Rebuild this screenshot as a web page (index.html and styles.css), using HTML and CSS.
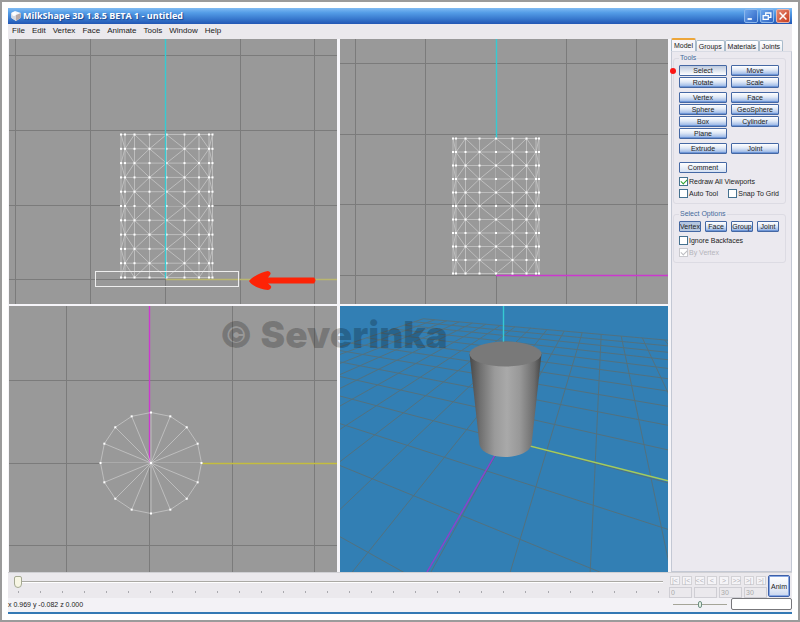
FILE: index.html
```html
<!DOCTYPE html>
<html lang="en">
<head>
    <meta charset="UTF-8">
    <meta name="viewport" content="width=device-width, initial-scale=1.0">
    <title>MilkShape 3D 1.8.5 BETA 1 - untitled</title>
    <link rel="stylesheet" href="styles.css">
</head>
<body>

<div class="window">
    <header class="titlebar">
        <svg class="logo" viewBox="0 0 12 12">
            <path d="M1 3 L5 1 L11 3 L10.500 8 L6 11 L1.500 8 Z" fill="#f4f6fa"/>
            <path d="M1 3 L6 5 L6 11 L1.500 8 Z" fill="#d5d9e2"/>
            <path d="M6 5 L11 3 L10.500 8 L6 11 Z" fill="#b9a9a6"/>
            <circle cx="4" cy="4" r="2" fill="#fff"/>
        </svg>
        <h1>MilkShape 3D 1.8.5 BETA 1 - untitled</h1>
        <div class="window-buttons">
            <button type="button" aria-label="Minimize"><svg viewBox="0 0 14 14"><path d="M3 10.500h5" stroke="#fff" stroke-width="2"/></svg></button>
            <button type="button" aria-label="Restore"><svg viewBox="0 0 14 14"><path d="M5.500 6V3.500h6v5H9M5 3.500h7" stroke="#fff" fill="none" stroke-width="1.500"/><path d="M2.500 6.500h6v4.500h-6zM2 6.500h7" stroke="#fff" fill="none" stroke-width="1.500"/></svg></button>
            <button type="button" class="close" aria-label="Close"><svg viewBox="0 0 14 14"><path d="M3 3l8 8M11 3l-8 8" stroke="#fff" stroke-width="1.800"/></svg></button>
        </div>
    </header>

    <nav class="menu">
        <a href="#">File</a>
        <a href="#">Edit</a>
        <a href="#">Vertex</a>
        <a href="#">Face</a>
        <a href="#">Animate</a>
        <a href="#">Tools</a>
        <a href="#">Window</a>
        <a href="#">Help</a>
    </nav>

    <main class="workspace">
        <div class="viewports">
            <svg class="view" viewBox="9 39 328 265" preserveAspectRatio="xMidYMid slice">
                <path class="grid" d="M15.500 0V400M90.500 0V400M165.500 0V400M240.500 0V400M314.500 0V400M0 55.500H400M0 130.500H400M0 205.500H400M0 279.500H400"/>
                <path class="axis-x soft" d="M166 279.500H400"/>
                <g id="front"></g>
                <path class="axis-y" d="M165.500 39V278"/>
                <rect class="selection" x="95.500" y="271.500" width="143" height="15"/>
                <path class="arrow" d="M249 281C253 276 262 272 268 271Q272 272 270 275L268 277.500H314Q317 280 314 283.500H268L271 286Q272 289 268 290C260 289 252 286 249 281Z"/>
            </svg>
            <svg class="view" viewBox="340 39 328 265" preserveAspectRatio="xMidYMid slice">
                <path class="grid" d="M355.500 0V400M425.500 0V400M496.500 0V400M566.500 0V400M636.500 0V400M300 63.500H700M300 134.500H700M300 204.500H700M300 275.500H700"/>
                <path class="axis-y" d="M496.500 39V138"/>
                <path class="axis-z" d="M496 275.500H700"/>
                <g id="side"></g>
            </svg>
            <svg class="view" viewBox="9 306 328 266" preserveAspectRatio="xMidYMid slice">
                <path class="grid" d="M66.500 300V600M149.500 300V600M232.500 300V600M314.500 300V600M0 380.500H400M0 463.500H400M0 545.500H400"/>
                <path class="axis-z" d="M149.500 306V463"/>
                <path class="axis-x" d="M202 463.500H400"/>
                <g id="top"></g>
            </svg>
            <svg class="view view-3d" viewBox="340 306 328 266" preserveAspectRatio="xMidYMid slice">
                <defs>
                    <linearGradient id="shade">
                        <stop offset="0" stop-color="#484848"/>
                        <stop offset="0.150" stop-color="#707070"/>
                        <stop offset="0.350" stop-color="#9a9a9a"/>
                        <stop offset="0.520" stop-color="#a9a9a9"/>
                        <stop offset="0.700" stop-color="#989898"/>
                        <stop offset="0.900" stop-color="#6c6c6c"/>
                        <stop offset="1" stop-color="#444"/>
                    </linearGradient>
                </defs>
                <g id="floor"></g>
                <path class="axis-y" d="M503.500 306V345"/>
                <path class="axis-x bright" d="M504 439.500L668 480.700"/>
                <path class="axis-z dim" d="M504 439.500L427 572"/>
                <path class="body" d="M469.500 354L479.500 445C484 461 526 461 531.500 445L541.500 354Z"/>
                <ellipse cx="505.500" cy="354" rx="36" ry="12.500" fill="#797979"/>
            </svg>
            <div class="watermark">© Severinka</div>
        </div>

        <aside class="sidebar">
            <div class="tabs">
                <button type="button" class="active">Model</button>
                <button type="button">Groups</button>
                <button type="button">Materials</button>
                <button type="button">Joints</button>
            </div>
            <div class="panel">
                <fieldset>
                    <legend>Tools</legend>
                    <div class="tools">
                        <button type="button" class="selected">Select</button>
                        <button type="button">Move</button>
                        <button type="button">Rotate</button>
                        <button type="button">Scale</button>
                    </div>
                    <div class="tools">
                        <button type="button">Vertex</button>
                        <button type="button">Face</button>
                        <button type="button">Sphere</button>
                        <button type="button">GeoSphere</button>
                        <button type="button">Box</button>
                        <button type="button">Cylinder</button>
                        <button type="button">Plane</button>
                    </div>
                    <div class="tools">
                        <button type="button">Extrude</button>
                        <button type="button">Joint</button>
                    </div>
                    <div class="tools comment">
                        <button type="button" class="light">Comment</button>
                    </div>
                    <div class="checks">
                        <label class="wide"><input type="checkbox" checked>Redraw All Viewports</label>
                        <label><input type="checkbox">Auto Tool</label>
                        <label><input type="checkbox">Snap To Grid</label>
                    </div>
                    <span class="dot"></span>
                </fieldset>
                <fieldset>
                    <legend>Select Options</legend>
                    <div class="options">
                        <button type="button" class="pressed">Vertex</button>
                        <button type="button">Face</button>
                        <button type="button">Group</button>
                        <button type="button">Joint</button>
                    </div>
                    <div class="checks">
                        <label class="wide"><input type="checkbox">Ignore Backfaces</label>
                        <label class="wide disabled"><input type="checkbox" checked disabled>By Vertex</label>
                    </div>
                </fieldset>
            </div>
        </aside>
    </main>

    <section class="timeline">
        <div class="track">
            <input type="range" class="frames" min="0" max="29" value="0" aria-label="Frame">
            <div class="ticks" id="ticks"></div>
        </div>
        <div class="player">
            <div class="controls">
                <button type="button" disabled>|&lt;</button>
                <button type="button" disabled>|&lt;</button>
                <button type="button" disabled>&lt;&lt;</button>
                <button type="button" disabled>&lt;</button>
                <button type="button" disabled>&gt;</button>
                <button type="button" disabled>&gt;&gt;</button>
                <button type="button" disabled>&gt;|</button>
                <button type="button" disabled>&gt;|</button>
            </div>
            <div class="numbers">
                <input type="text" value="0" aria-label="Current frame" disabled>
                <input type="text" value="" aria-label="Time" disabled>
                <input type="text" value="30" aria-label="Last frame" disabled>
                <input type="text" value="30" aria-label="Total frames" disabled>
            </div>
        </div>
        <button type="button" class="anim">Anim</button>
    </section>

    <footer class="status">
        <span>x 0.969 y -0.082 z 0.000</span>
        <input type="range" class="speed" aria-label="Speed">
        <input type="text" class="message" aria-label="Message">
    </footer>
</div>

<script src="scene.js"></script>
</body>
</html>
```
FILE: styles.css
```css
* {
    box-sizing: border-box;
}
body {
    margin: 0;
    height: 100vh;
    padding: 6px;
    border: 2px solid #9b9b9b;
    background-color: #fff;
    font-family: "Liberation Sans", Arial, sans-serif;
    font-size: 7px;
    color: #222;
}
button,
input {
    font-family: inherit;
    font-size: 7px;
    color: #222;
    margin: 0;
    padding: 0;
}
.window {
    display: flex;
    flex-direction: column;
    height: 100%;
    background-color: #ebe9ed;
    border-bottom: 2px solid #3479b4;
}

/* title bar */
.titlebar {
    display: flex;
    align-items: center;
    flex: none;
    gap: 1px;
    height: 16px;
    padding: 0 2px;
    background: linear-gradient(#80bbf3, #539ce6 30%, #3a7bcf 65%, #2257b4);
}
.logo {
    width: 12px;
    height: 12px;
}
.titlebar h1 {
    flex: 1;
    margin: 0;
    font-family: "Open Sans", "Liberation Sans", sans-serif;
    font-size: 9px;
    font-weight: bold;
    line-height: 16px;
    color: #fff;
    text-shadow: 1px 1px 1px #1a4690;
}
.window-buttons {
    display: flex;
    gap: 2px;
}
.window-buttons button {
    width: 14px;
    height: 14px;
    border: 1px solid #8bb7ec;
    border-radius: 2px;
    background: linear-gradient(135deg, #6ea7ec, #2d64c4);
}
.window-buttons svg {
    display: block;
    width: 12px;
    height: 12px;
}
.window-buttons .close {
    border-color: #eab2a6;
    background: linear-gradient(135deg, #e58872, #c93c1d);
}

/* menu */
.menu {
    display: flex;
    flex: none;
    gap: 7px;
    height: 15px;
    padding: 0 4px;
    line-height: 14px;
}
.menu a {
    color: #222;
    font-size: 8px;
    text-decoration: none;
}

/* viewports */
.workspace {
    display: flex;
    flex: 1;
    min-height: 0;
    gap: 3px;
    padding-left: 1px;
    background-color: #f6f5f9;
}
.viewports {
    position: relative;
    display: grid;
    flex: 1;
    grid-template-columns: 1fr 1fr;
    grid-template-rows: 265fr 266fr;
    gap: 2px 3px;
}
.view {
    display: block;
    width: 100%;
    height: 100%;
    min-height: 0;
    background-color: #999;
}
.view-3d {
    background-color: #327fb4;
}
.view path {
    fill: none;
}
.view .body {
    fill: url(#shade);
}
.view .grid {
    stroke: #7b7b7b;
}
.view .floor {
    stroke: #52717f;
}
.view .axis-x,
.view .axis-y,
.view .axis-z {
    stroke-width: 1.4px;
}
.view .axis-x {
    stroke: #c4bd3e;
}
.view .axis-x.soft {
    stroke: #bab66f;
}
.view .axis-x.bright {
    stroke: #a5cc5b;
}
.view .axis-y {
    stroke: #36cad2;
}
.view .axis-z {
    stroke: #cc38ce;
}
.view .axis-z.dim {
    stroke: #8f40cc;
}
.view .wire {
    stroke: #c6c6c6;
    stroke-width: 0.8px;
}
.view .vertices {
    fill: #fff;
}
.view .selection {
    fill: none;
    stroke: #eee;
}
.view .arrow {
    fill: #fd2306;
}
.watermark {
    position: absolute;
    top: 53%;
    left: 0;
    width: 100%;
    padding-right: 10px;
    font-family: Inter, "Liberation Sans", sans-serif;
    font-size: 37px;
    font-weight: 900;
    line-height: 28px;
    text-align: center;
    color: rgba(0, 0, 0, 0.22);
    pointer-events: none;
}

/* sidebar */
.sidebar {
    display: flex;
    flex-direction: column;
    width: 121px;
    background-color: #ebe9ed;
}
.tabs {
    display: flex;
    align-items: flex-end;
    height: 12px;
}
.tabs button {
    flex: auto;
    height: 11px;
    border: 1px solid #a9bccb;
    border-bottom: none;
    border-radius: 2px 2px 0 0;
    background: linear-gradient(#fff, #ecebf0);
    white-space: nowrap;
}
.tabs .active {
    height: 13px;
    border-top: 2px solid #eda63a;
    background: #f6f5f9;
}
.tabs button:last-child {
    margin-right: 9px;
}
.panel {
    flex: 1;
    padding: 2px 5px 0 1px;
    border: 1px solid #c3c8d4;
    border-top-color: #d8dbe4;
    background-color: #ebe9ef;
}
fieldset {
    position: relative;
    min-width: 0;
    margin: 0 0 6px;
    padding: 3px 6px 5px 5px;
    border: 1px solid #dcdbe3;
    border-radius: 3px;
}
legend {
    padding: 0 1px;
    line-height: 8px;
    color: #45699a;
}
.tools {
    display: grid;
    grid-template-columns: 1fr 1fr;
    gap: 1px 4px;
    margin-bottom: 4px;
}
.tools button,
.options button {
    height: 11px;
    border: 1px solid #4568a4;
    border-radius: 1px;
    background: linear-gradient(#fff, #dfe8f6 45%, #8fb0e4);
    line-height: 9px;
    box-shadow: inset 0 -1px 0 #6f96d6;
}
.tools .selected {
    background: linear-gradient(#bcc9de, #fff);
    box-shadow: none;
}
.tools .light {
    background: linear-gradient(#fff, #d5e0f2);
    box-shadow: none;
}
.comment {
    margin-top: 8px;
}
.options {
    display: grid;
    grid-template-columns: repeat(4, 1fr);
    gap: 4px;
    margin-bottom: 4px;
}
.options .pressed {
    background: #b4c6df;
    box-shadow: none;
}
.checks {
    display: grid;
    grid-template-columns: 1fr 1fr;
    gap: 3px 0;
}
.checks label {
    display: flex;
    align-items: center;
    gap: 1px;
    height: 9px;
    white-space: nowrap;
}
.checks .wide {
    grid-column: span 2;
}
.checks input {
    flex: none;
    appearance: none;
    width: 9px;
    height: 9px;
    border: 1px solid #45718f;
    background-color: #fff;
}
.checks input:checked::before {
    content: "";
    display: block;
    width: 5px;
    height: 3px;
    margin: 1px;
    border: solid #2fa12f;
    border-width: 0 0 1px 1px;
    transform: rotate(-45deg);
}
.checks .disabled,
.checks .disabled input {
    color: #b5b5bb;
    border-color: #c9c9ce;
}
.checks .disabled input:checked::before {
    border-color: #bcbcc0;
}
.dot {
    position: absolute;
    top: 6px;
    left: -4px;
    width: 6px;
    height: 6px;
    border-radius: 50%;
    background-color: #fb1414;
}

/* timeline */
.timeline {
    display: flex;
    flex: none;
    height: 26px;
    padding: 3px 2px 1px 6px;
    border-top: 1px solid #d0d0d4;
}
.track {
    flex: 1;
}
input[type="range"] {
    appearance: none;
    display: block;
    background: none;
}
.frames {
    width: 100%;
    height: 12px;
}
.frames::-webkit-slider-runnable-track {
    height: 2px;
    background: linear-gradient(#aaa9a4 50%, #fff 50%);
}
.frames::-webkit-slider-thumb {
    appearance: none;
    width: 8px;
    height: 12px;
    margin-top: -5px;
    border: 1px solid #a5a993;
    border-radius: 2px 2px 4px 4px;
    background-color: #f7f6e4;
}
.ticks {
    display: flex;
    justify-content: space-between;
    padding: 3px 4px 0;
}
.ticks i {
    width: 1px;
    height: 2px;
    background-color: #a9a9ae;
}
.player {
    width: 98px;
    margin: 0 1px 0 6px;
}
.controls {
    display: grid;
    grid-template-columns: repeat(8, 10px);
    justify-content: space-between;
    height: 10px;
    padding: 0 1px;
    margin-bottom: 1px;
}
.controls button {
    height: 9px;
    border: 1px solid #d3d2d6;
    background-color: #f5f4f7;
    line-height: 6px;
    color: #b4b3b8;
}
.numbers {
    display: grid;
    grid-template-columns: repeat(4, 1fr);
    gap: 2px;
}
.numbers input {
    width: 100%;
    height: 11px;
    padding-left: 1px;
    border: 1px solid #cfced4;
    background-color: #ebe9ed;
    color: #aaa;
}
.anim {
    width: 22px;
    height: 22px;
    margin-top: -1px;
    border: 1px solid #3c5fa8;
    border-radius: 2px;
    background: linear-gradient(#fff, #e8edf7 60%, #c9d6ef);
    box-shadow: inset 0 0 0 1px #89a8e2;
}

/* status bar */
.status {
    display: flex;
    align-items: center;
    flex: none;
    height: 14px;
    padding-bottom: 2px;
    background-color: #f3f2f6;
}
.status span {
    flex: 1;
}
.speed {
    width: 54px;
    height: 8px;
    margin-right: 4px;
}
.speed::-webkit-slider-runnable-track {
    height: 1px;
    background-color: #a5a598;
}
.speed::-webkit-slider-thumb {
    appearance: none;
    width: 4px;
    height: 7px;
    margin-top: -3px;
    border: 1px solid #6f8f83;
    border-radius: 2px;
    background-color: #e5f2e5;
}
.message {
    width: 61px;
    height: 12px;
    border: 1px solid #77777b;
    border-radius: 2px;
    background-color: #fff;
}
```
FILE: scene.js
```js
const NS = 'http://www.w3.org/2000/svg';

function addPath(id, className, d) {
    const path = document.createElementNS(NS, 'path');
    path.setAttribute('class', className);
    path.setAttribute('d', d);
    document.getElementById(id).appendChild(path);
    return path;
}

function addVertices(id, points) {
    for (const [x, y] of points) {
        const rect = document.createElementNS(NS, 'rect');
        rect.setAttribute('class', 'vertices');
        rect.setAttribute('x', x - 1);
        rect.setAttribute('y', y - 1);
        rect.setAttribute('width', 2);
        rect.setAttribute('height', 2);
        document.getElementById(id).appendChild(rect);
    }
}

// cylinder seen from the side, 10 stacks
function drawCylinder(id, cols, top, bottom) {
    const rows = [];
    for (let r = 0; r <= 10; r++) {
        rows.push(top + (bottom - top) * r / 10);
    }
    let d = '';
    const points = [];
    cols.forEach((x, c) => {
        d += `M${x} ${top}V${bottom}`;
        rows.forEach((y, r) => {
            points.push([x, y]);
            if (c < 8 && r < 10) {
                d += (c + r) % 2 === 0
                    ? `M${x} ${y}L${cols[c + 1]} ${rows[r + 1]}`
                    : `M${cols[c + 1]} ${y}L${x} ${rows[r + 1]}`;
            }
        });
    });
    rows.forEach(y => d += `M${cols[0]} ${y}H${cols[8]}`);
    addPath(id, 'wire', d);
    addVertices(id, points);
}

function drawDisc(id, cx, cy, radius) {
    const points = [];
    let d = '';
    for (let i = 0; i < 16; i++) {
        const a = Math.PI * i / 8;
        const x = cx + radius * Math.cos(a);
        const y = cy + radius * Math.sin(a);
        points.push([x, y]);
        d += `M${cx} ${cy}L${x} ${y}`;
    }
    d += 'M' + points.map(p => p.join(' ')).join('L') + 'Z';
    addPath(id, 'wire', d);
    addVertices(id, [...points, [cx, cy]]);
}

// perspective projection of the ground plane
function project(u, v) {
    const w = 1 - 0.062 * u - 0.1475 * v;
    return [(504.2 + 8.6 * u - 89.2 * v) / w, (439.5 - 16.7 * u - 38 * v) / w];
}

function nearest(fixed, scale, other) {
    return Math.min(10, (0.8 - other * fixed) / scale);
}

function drawFloor(id) {
    let d = '';
    for (let i = -10; i <= 10; i++) {
        const vMax = nearest(i, 0.1475, 0.062);
        const uMax = nearest(i, 0.062, 0.1475);
        d += `M${project(i, -10)}L${project(i, vMax)}`;
        d += `M${project(-10, i)}L${project(uMax, i)}`;
    }
    addPath(id, 'floor', d);
}

drawCylinder('front', [121, 125, 134.5, 149.5, 166.5, 184.5, 199, 209, 212.5], 134.5, 277.5);
drawCylinder('side', [453, 456, 465.5, 479.5, 496, 512.5, 526.5, 536, 539], 138.5, 273.5);
drawDisc('top', 151, 463, 50.5);
drawFloor('floor');

const ticks = document.getElementById('ticks');
for (let i = 0; i < 30; i++) {
    ticks.appendChild(document.createElement('i'));
}
```
